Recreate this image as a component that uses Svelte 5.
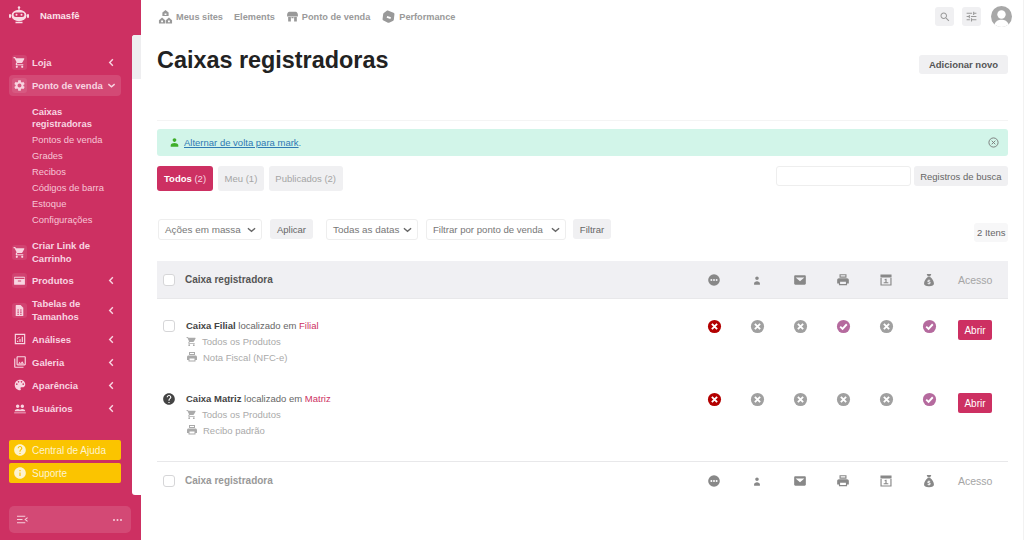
<script>
  const p = {
    cart: 'M7 18c-1.1 0-1.99.9-1.99 2S5.9 22 7 22s2-.9 2-2-.9-2-2-2zM1 2v2h2l3.6 7.59-1.35 2.45c-.16.28-.25.61-.25.96 0 1.1.9 2 2 2h12v-2H7.42c-.14 0-.25-.11-.25-.25l.03-.12.9-1.63h7.45c.75 0 1.41-.41 1.75-1.03l3.58-6.49c.08-.14.12-.31.12-.48 0-.55-.45-1-1-1H5.21l-.94-2H1zM17 18c-1.1 0-1.99.9-1.99 2s.89 2 1.99 2 2-.9 2-2-.9-2-2-2z',
    gear: 'M19.14 12.94c.04-.3.06-.61.06-.94 0-.32-.02-.64-.07-.94l2.03-1.58c.18-.14.23-.41.12-.61l-1.92-3.32c-.12-.22-.37-.29-.59-.22l-2.39.96c-.5-.38-1.03-.7-1.62-.94l-.36-2.54c-.04-.24-.24-.41-.48-.41h-3.84c-.24 0-.43.17-.47.41l-.36 2.54c-.59.24-1.13.57-1.62.94l-2.39-.96c-.22-.08-.47 0-.59.22L2.74 8.87c-.12.21-.08.47.12.61l2.03 1.58c-.05.3-.09.63-.09.94s.02.64.07.94l-2.03 1.58c-.18.14-.23.41-.12.61l1.92 3.32c.12.22.37.29.59.22l2.39-.96c.5.38 1.03.7 1.62.94l.36 2.54c.05.24.24.41.48.41h3.84c.24 0 .44-.17.47-.41l.36-2.54c.59-.24 1.13-.56 1.62-.94l2.39.96c.22.08.47 0 .59-.22l1.92-3.32c.12-.22.07-.47-.12-.61l-2.01-1.58zM12 15.6c-1.98 0-3.6-1.62-3.6-3.6s1.62-3.6 3.6-3.6 3.6 1.62 3.6 3.6-1.62 3.6-3.6 3.6z',
    print: 'M19 9H5c-1.66 0-3 1.34-3 3v6h3v3h14v-3h3v-6c0-1.66-1.34-3-3-3zM7 15h10v4H7v-4zM6 2h12v6H6V2zm2 2v2h8V4H8z',
    mail: 'M20 4H4c-1.1 0-1.99.9-1.99 2L2 18c0 1.1.9 2 2 2h16c1.1 0 2-.9 2-2V6c0-1.1-.9-2-2-2zm-8 10L4.500 7.500h15L12 14z',
    search: 'M15.5 14h-.79l-.28-.27C15.41 12.59 16 11.11 16 9.5 16 5.91 13.09 3 9.5 3S3 5.91 3 9.5 5.91 16 9.5 16c1.61 0 3.09-.59 4.23-1.57l.27.28v.79l5 4.99L20.49 19l-4.99-5zm-6 0C7.01 14 5 11.99 5 9.5S7.01 5 9.5 5 14 7.01 14 9.5 11.99 14 9.5 14z',
    tune: 'M3 17v2h6v-2H3zM3 5v2h10V5H3zm10 16v-2h8v-2h-8v-2h-2v6h2zM7 9v2H3v2h4v2h2V9H7zm14 4v-2H11v2h10zm-6-4h2V7h4V5h-4V3h-2v6z',
    help: 'M12 2C6.48 2 2 6.48 2 12s4.48 10 10 10 10-4.48 10-10S17.52 2 12 2zm1 17h-2v-2h2v2zm2.07-7.75l-.9.92C13.45 12.9 13 13.5 13 15h-2v-.5c0-1.1.45-2.1 1.17-2.83l1.24-1.26c.37-.36.59-.86.59-1.41 0-1.1-.9-2-2-2s-2 .9-2 2H8c0-2.21 1.79-4 4-4s4 1.79 4 4c0 .88-.36 1.68-.93 2.25z',
    info: 'M12 2C6.48 2 2 6.48 2 12s4.48 10 10 10 10-4.48 10-10S17.52 2 12 2zm1 15h-2v-6h2v6zm0-8h-2V7h2v2z',
    person: 'M12 11c1.9 0 3.4-1.5 3.4-3.4S13.9 4.2 12 4.2 8.6 5.7 8.6 7.6 10.1 11 12 11zm0 2c-3 0-7 1.3-7 3.8V20h14v-3.2c0-2.5-4-3.8-7-3.8z',
    bust: 'M12 12c1.700 0 3-1.300 3-3s-1.300-3-3-3-3 1.300-3 3 1.300 3 3 3zm-5 8v-2.500c0-1.800 2.500-3.500 5-3.500s5 1.700 5 3.500V20H7z',
    palette: 'M12 3c-4.97 0-9 4.03-9 9s4.03 9 9 9c.83 0 1.5-.67 1.5-1.5 0-.39-.15-.74-.39-1.01-.23-.26-.38-.61-.38-.99 0-.83.67-1.5 1.5-1.5H16c2.76 0 5-2.24 5-5 0-4.42-4.03-8-9-8zm-5.5 9c-.83 0-1.5-.67-1.5-1.5S5.67 9 6.5 9 8 9.67 8 10.5 7.33 12 6.5 12zm3-4C8.67 8 8 7.33 8 6.5S8.67 5 9.5 5s1.5.67 1.5 1.5S10.33 8 9.5 8zm5 0c-.83 0-1.5-.67-1.5-1.5S13.67 5 14.5 5s1.5.67 1.5 1.5S15.33 8 14.5 8zm3 4c-.83 0-1.5-.67-1.5-1.5S16.67 9 17.5 9s1.5.67 1.5 1.5-.67 1.5-1.5 1.5z',
    gallery: 'M20 4v12H8V4h12m0-2H8c-1.1 0-2 .9-2 2v12c0 1.1.9 2 2 2h12c1.1 0 2-.9 2-2V4c0-1.1-.9-2-2-2zm-8.5 9.67l1.69 2.26 2.48-3.1L19 15H9zM2 6v14c0 1.1.9 2 2 2h14v-2H4V6H2z',
    box: 'M3 5h18c.6 0 1 .4 1 1v13c0 .6-.4 1-1 1H3c-.6 0-1-.4-1-1V6c0-.6.4-1 1-1zm0 2v2h18V7H3zm6 5v2h6v-2H9z',
    doc: 'M6 2h8l5 5v15H5V3c0-.6.4-1 1-1zm2 8v2h3v-2H8zm5 0v2h3v-2h-3zm-5 4v2h3v-2H8zm5 0v2h3v-2h-3zm-5 4v2h3v-2H8zm5 0v2h3v-2h-3z',
    chart: 'M3 3h18v18H3V3zm2 2v14h14V5H5zm2 10h2v2H7v-2zm4-3h2v5h-2v-5zm4-4h2v9h-2V8zM7 11l4-3 1 1-4 3-1-1z',
    users: 'M8 12a3 3 0 100-6 3 3 0 000 6zm8 0a3 3 0 100-6 3 3 0 000 6zM3 17c0-2 3-3.500 5-3.500 1.500 0 3 .5 4 1.300 1-.8 2.500-1.300 4-1.300 2 0 5 1.500 5 3.500v.5H3V17zM2 19.500h20V21H2v-1.500z',
    sites: 'M12 1.500l5 4V11H7V5.500l5-4zM1.500 18l5-4.500 5 4.500v5h-10v-5zm11 0l5-4.500 5 4.500v5h-10v-5zM5 18.500v2.500h3v-2.500H5zm11 0v2.500h3v-2.500h-3zM10.500 7v2.500h3V7h-3z',
    store: 'M6 3h12c2 0 4 2.500 4 6v3H2V9c0-3.500 2-6 4-6zM4 13h5v8H4v-8zm11 0h5v8h-5v-8zM10 13h4v2h-4v-2z',
    cube: 'M11 2.500l9 3.500c1 .4 1.600 1.400 1.500 2.500l-1 8.500c-.1 1-.7 1.800-1.600 2.200l-6 2.600c-.6.2-1.200.2-1.800 0L4 18.500c-1-.4-1.600-1.400-1.500-2.400l1-8c.1-.9.700-1.700 1.500-2.100l4.200-3.300c.5-.3 1.200-.4 1.800-.2zm-1 8.500l-1 3 6 2 1-3-6-2z',
    bag: 'M8 1.500h8l-2 4.500h-4L8 1.500zM10 7h4c3.500 2.500 6.500 7.500 6.500 11 0 3-3 4.500-8.500 4.500S3.500 21 3.500 18c0-3.500 3-8.500 6.500-11zm1.200 4v1c-1.200.2-2 1-2 2 0 2.400 3.800 1.500 3.800 2.800 0 .9-2 .8-3.200.1l-.5 1.200c.6.400 1.200.5 1.900.6v1h1.500v-1c1.300-.2 2.100-1.100 2.100-2.100 0-2.500-3.800-1.600-3.800-2.700 0-.8 1.600-.7 2.800-.2l.4-1.200c-.5-.2-1-.4-1.500-.4v-1h-1.500z',
    cal: 'M2.500 2.500h19v5h-19v-5zM2.500 8.500h2v11h15v-11h2v13h-19v-13zM8 17.500h8V16h-3v-6h-1.500L9 11.500l1 1 1-.8V16H8v1.500z',
    dots: 'M12 2a10 10 0 100 20 10 10 0 000-20zM7.500 10.300a1.700 1.700 0 110 3.400 1.700 1.700 0 010-3.400zm4.500 0a1.700 1.700 0 110 3.400 1.700 1.700 0 010-3.400zm4.500 0a1.700 1.700 0 110 3.400 1.700 1.700 0 010-3.400z'
  };

  const before = [
    { icon: 'cart', label: 'Loja', chip: true, arrow: true }
  ];
  const subItems = ['Pontos de venda', 'Grades', 'Recibos', 'Códigos de barra', 'Estoque', 'Configurações'];
  const after = [
    { icon: 'cart', label: 'Criar Link de Carrinho', chip: true, two: true, cls: 'criar' },
    { icon: 'box', label: 'Produtos', chip: true, arrow: true, cls: 'produtos' },
    { icon: 'doc', label: 'Tabelas de Tamanhos', chip: true, arrow: true, two: true, cls: 'tabelas' },
    { icon: 'chart', label: 'Análises', arrow: true, cls: 'analises' },
    { icon: 'gallery', label: 'Galeria', arrow: true },
    { icon: 'palette', label: 'Aparência', arrow: true },
    { icon: 'users', label: 'Usuários', arrow: true }
  ];

  const cols = ['dots', 'bust', 'mail', 'print', 'cal', 'bag'];
  const rows = [
    { name: 'Caixa Filial', place: 'Filial', sub: 'Nota Fiscal (NFC-e)', status: ['no', 'off', 'off', 'ok', 'off', 'ok'], check: true },
    { name: 'Caixa Matriz', place: 'Matriz', sub: 'Recibo padrão', status: ['no', 'off', 'off', 'off', 'off', 'ok'], check: false }
  ];
</script>

{#snippet icon(name, size)}
  <svg width={size} height={size} viewBox="0 0 24 24" fill="currentColor"><path fill-rule="evenodd" d={p[name]} /></svg>
{/snippet}

{#snippet chevron(open)}
  <svg class="chev" width="9" height="9" viewBox="0 0 10 10" fill="none" stroke="currentColor" stroke-width="1.6">
    {#if open}<path d="M1.500 3.500L5 6.500l3.500-3" />{:else}<path d="M6.500 1.500L3 5l3.500 3.500" />{/if}
  </svg>
{/snippet}

{#snippet down()}
  <svg class="down" width="9" height="6" viewBox="0 0 10 6" fill="none" stroke="#666" stroke-width="1.500"><path d="M1 1l4 3.500L9 1" /></svg>
{/snippet}

{#snippet menuItem(item)}
  <div class="item {item.cls || ''}">
    <span class="mi" class:chip={item.chip}>{@render icon(item.icon, item.chip ? 13 : 14)}</span>
    <span class="label" class:two={item.two}>{item.label}</span>
    {#if item.arrow}{@render chevron(false)}{/if}
  </div>
{/snippet}

{#snippet status(kind)}
  <svg class="st" width="15" height="15" viewBox="0 0 16 16">
    <circle cx="8" cy="8" r="7" fill={kind === 'no' ? '#b30000' : kind === 'ok' ? '#b56a9e' : '#a0a0a0'} />
    {#if kind === 'ok'}
      <path d="M4.500 8.200l2.500 2.400 4.500-5" fill="none" stroke="#fff" stroke-width="2" />
    {:else}
      <path d="M5.200 5.200l5.600 5.600M10.800 5.200l-5.600 5.600" fill="none" stroke="#fff" stroke-width="2" />
    {/if}
  </svg>
{/snippet}

{#snippet headRow()}
  <span class="cb head-cb"></span>
  <span class="head-title">Caixa registradora</span>
  {#each cols as c}
    <span class="col head-icon">{@render icon(c, 14)}</span>
  {/each}
  <span class="access">Acesso</span>
{/snippet}

<div class="page">
  <aside class="sidebar">
    <div class="brand">
      <svg width="20" height="18" viewBox="0 0 20 18">
        <circle cx="10" cy="1.500" r="1.200" fill="#f9dbe5" />
        <path d="M10 2v2" stroke="#f9dbe5" />
        <ellipse cx="10" cy="9.500" rx="7.500" ry="5.800" fill="#f9dbe5" />
        <rect x="0" y="8" width="2" height="4" rx="1" fill="#f9dbe5" />
        <rect x="18" y="8" width="2" height="4" rx="1" fill="#f9dbe5" />
        <rect x="4.500" y="6.500" width="11" height="4.500" rx="2.200" fill="#cd3062" />
        <circle cx="7.500" cy="8.700" r="1" fill="#f9dbe5" />
        <circle cx="12.500" cy="8.700" r="1" fill="#f9dbe5" />
        <path d="M6.500 16.500h7" stroke="#f9dbe5" stroke-width="1.500" />
      </svg>
      <span>Namasfê</span>
    </div>

    <nav class="menu">
      {#each before as item}
        {@render menuItem(item)}
      {/each}
      <div class="item active">
        <span class="mi chip">{@render icon('gear', 13)}</span>
        <span class="label">Ponto de venda</span>
        {@render chevron(true)}
      </div>
      <div class="submenu">
        <div class="sub current">Caixas registradoras</div>
        {#each subItems as s}
          <div class="sub">{s}</div>
        {/each}
      </div>
      {#each after as item}
        {@render menuItem(item)}
      {/each}
    </nav>

    <div class="helpers">
      <div class="yellow"><span class="yi">{@render icon('help', 14)}</span>Central de Ajuda</div>
      <div class="yellow"><span class="yi">{@render icon('info', 14)}</span>Suporte</div>
    </div>

    <div class="side-foot">
      <svg width="11" height="9" viewBox="0 0 12 9" fill="none" stroke="#f6cfdc" stroke-width="1.200"><path d="M0 1h9M0 4.500h6M0 8h9M11.500 2.500L9 4.500l2.500 2" /></svg>
      <svg width="9" height="2" viewBox="0 0 9 2" fill="#f6cfdc"><circle cx="1" cy="1" r="1" /><circle cx="4.500" cy="1" r="1" /><circle cx="8" cy="1" r="1" /></svg>
    </div>

    <div class="side-scroll"><div class="thumb"></div></div>
  </aside>

  <main class="main">
    <div class="topbar">
      <span class="tl">{@render icon('sites', 15)}<b>Meus sites</b></span>
      <span class="tl"><b>Elements</b></span>
      <span class="tl">{@render icon('store', 13)}<b>Ponto de venda</b></span>
      <span class="tl">{@render icon('cube', 15)}<b>Performance</b></span>
      <span class="top-right">
        <span class="square">{@render icon('search', 12)}</span>
        <span class="square">{@render icon('tune', 13)}</span>
        <svg class="avatar" width="21" height="21" viewBox="0 0 21 21">
          <circle cx="10.500" cy="10.500" r="10.500" fill="#a8a8a8" />
          <circle cx="10.500" cy="8.500" r="4.200" fill="#fff" />
          <path d="M3.500 18.500c1-3.500 4-4.800 7-4.800s6 1.300 7 4.800c-2 1.600-4.300 2.500-7 2.500s-5-.9-7-2.500z" fill="#fff" />
        </svg>
      </span>
    </div>

    <header class="title-row">
      <h1>Caixas registradoras</h1>
      <button class="btn add">Adicionar novo</button>
    </header>

    <div class="notice">
      <span class="green">{@render icon('person', 13)}</span>
      <span><a href="#top">Alternar de volta para mark</a>.</span>
      <svg class="close" width="11" height="11" viewBox="0 0 12 12" fill="none" stroke="#777" stroke-width="1"><circle cx="6" cy="6" r="5" /><path d="M4 4l4 4M8 4l-4 4" /></svg>
    </div>

    <div class="tabs-row">
      <span class="tab on">Todos <i>(2)</i></span>
      <span class="tab">Meu (1)</span>
      <span class="tab">Publicados (2)</span>
      <span class="search-box">
        <input type="text" aria-label="Registros de busca" />
        <button class="btn plain">Registros de busca</button>
      </span>
    </div>

    <div class="filters">
      <span class="sel w1">Ações em massa{@render down()}</span>
      <button class="btn plain apply">Aplicar</button>
      <span class="sel w2">Todas as datas{@render down()}</span>
      <span class="sel w3">Filtrar por ponto de venda{@render down()}</span>
      <button class="btn plain apply f2">Filtrar</button>
      <span class="count">2 Itens</span>
    </div>

    <div class="table">
      <div class="line head">{@render headRow()}</div>
      <div class="body">
        {#each rows as r}
          <div class="line row">
            {#if r.check}
              <span class="cb"></span>
            {:else}
              <span class="q">{@render icon('help', 14)}</span>
            {/if}
            <div class="info">
              <div class="name"><b>{r.name}</b> localizado em <em>{r.place}</em></div>
              <div class="meta">{@render icon('cart', 11)}<span>Todos os Produtos</span></div>
              <div class="meta">{@render icon('print', 12)}<span>{r.sub}</span></div>
            </div>
            {#each r.status as s}
              <span class="col">{@render status(s)}</span>
            {/each}
            <span class="access"><button class="open">Abrir</button></span>
          </div>
        {/each}
      </div>
      <div class="line foot">{@render headRow()}</div>
    </div>
  </main>
</div>

<style>
  :global(body) {
    margin: 0;
    overflow: hidden;
    background: #fff;
  }

  .page {
    display: flex;
    height: 540px;
    font-family: "Liberation Sans", Arial, sans-serif;
    font-size: 9.5px;
    color: #555;
  }

  /* sidebar */
  .sidebar {
    position: relative;
    flex: 0 0 141px;
    display: flex;
    flex-direction: column;
    background: #cd3062;
    color: #f8d5e1;
    font-weight: 700;
  }

  .brand {
    display: flex;
    align-items: center;
    gap: 11px;
    height: 30px;
    padding-left: 9px;
    font-size: 9.5px;
    color: #fbe3ea;
  }

  .menu {
    margin: 22px 0 0 9px;
    width: 112px;
  }

  .item {
    display: flex;
    align-items: center;
    min-height: 20px;
    margin-bottom: 3px;
    padding: 0 5px 0 3px;
    box-sizing: border-box;
    border-radius: 4px;
  }

  .item.active {
    min-height: 21px;
    background: rgba(255, 255, 255, 0.12);
    margin-bottom: 10px;
  }

  .mi {
    flex: 0 0 15px;
    height: 15px;
    display: flex;
    align-items: center;
    justify-content: center;
    margin-right: 5px;
  }

  .mi.chip {
    background: rgba(255, 255, 255, 0.09);
    border-radius: 3px;
  }

  .label {
    flex: 1;
    line-height: 13px;
  }

  .chev {
    flex: none;
    margin-left: 2px;
  }

  .submenu {
    padding-left: 23px;
    margin-bottom: 11px;
    font-weight: 400;
    color: #f7c6d6;
    font-size: 9.4px;
  }

  .sub {
    line-height: 16px;
  }

  .sub.current {
    line-height: 12px;
    font-weight: 700;
    color: #f8d5e1;
    width: 70px;
    margin-bottom: 2px;
  }

  .criar {
    margin-bottom: 5px;
  }

  .produtos {
    margin-bottom: 7px;
  }

  .tabelas {
    margin-bottom: 6px;
  }

  .helpers {
    margin: 19px 0 0 9px;
    width: 112px;
    display: flex;
    flex-direction: column;
    gap: 3px;
  }

  .yellow {
    display: flex;
    align-items: center;
    height: 20px;
    border-radius: 2px;
    background: #fbc400;
    color: #fdf3cf;
    font-weight: 400;
    padding-left: 4px;
    font-size: 10px;
  }

  .yi {
    display: flex;
    margin-right: 5px;
  }

  .side-foot {
    display: flex;
    align-items: center;
    justify-content: space-between;
    margin: 23px 10px 0 9px;
    height: 27px;
    padding: 0 9px 0 8px;
    border-radius: 5px;
    background: rgba(255, 255, 255, 0.12);
  }

  .side-scroll {
    position: absolute;
    left: 132px;
    top: 35px;
    width: 9px;
    height: 460px;
    background: #fff;
    border-radius: 3px 0 0 3px;
  }

  .thumb {
    height: 44px;
    background: #eeeef0;
    border-radius: 3px 0 0 0;
  }

  /* main column */
  .main {
    flex: 1;
    min-width: 0;
    padding: 0 15px 0 16px;
    border-right: 1px solid #f2f2f2;
    overflow: hidden;
  }

  .topbar {
    display: flex;
    align-items: center;
    height: 33px;
    color: #999;
  }

  .tl {
    display: flex;
    align-items: center;
    gap: 3px;
    margin: 0 10px 0 1px;
  }

  .tl b {
    font-size: 9.200px;
    color: #9a9a9a;
  }

  .top-right {
    margin-left: auto;
    margin-right: -4px;
    display: flex;
    align-items: center;
    gap: 8px;
  }

  .square {
    width: 19px;
    height: 19px;
    display: flex;
    align-items: center;
    justify-content: center;
    background: #f0f0f2;
    border-radius: 3px;
    color: #999;
  }

  .avatar {
    margin-left: 2px;
  }

  .title-row {
    display: flex;
    justify-content: space-between;
    align-items: flex-start;
    height: 75px;
    padding-top: 12px;
    border-bottom: 1px solid #f4f4f4;
  }

  h1 {
    margin: 0;
    font-size: 23.400px;
    line-height: 30px;
    font-weight: 700;
    color: #222;
  }

  .btn {
    border: 0;
    border-radius: 3px;
    background: #f0f0f2;
    font: inherit;
    color: #555;
    padding: 0;
  }

  .add {
    width: 89px;
    height: 19px;
    margin-top: 10px;
    font-weight: 700;
  }

  .notice {
    display: flex;
    align-items: center;
    gap: 3px;
    height: 27px;
    margin-top: 8px;
    padding: 0 9px 0 11px;
    background: #d2f5e9;
    border-radius: 3px;
    color: #3b7fb5;
  }

  .notice a {
    color: #2f79b4;
  }

  .green {
    display: flex;
    color: #3fae2a;
  }

  .close {
    margin-left: auto;
  }

  .tabs-row {
    display: flex;
    align-items: flex-start;
    gap: 5px;
    margin-top: 10px;
    height: 25px;
  }

  .tab {
    height: 25px;
    line-height: 25px;
    padding: 0 6.500px;
    border-radius: 3px;
    background: #f0f0f2;
    color: #a5a5a5;
    white-space: nowrap;
  }

  .tab.on {
    background: #cd3062;
    color: #fff;
    font-weight: 700;
    padding: 0 7px;
  }

  .tab i {
    font-style: normal;
    font-weight: 400;
    color: #f8d5e1;
  }

  .search-box {
    margin-left: auto;
    display: flex;
    gap: 3px;
  }

  input {
    width: 135px;
    height: 20px;
    box-sizing: border-box;
    border: 1px solid #eee;
    border-radius: 3px;
    padding: 0;
    outline: 0;
  }

  .plain {
    height: 20px;
    padding: 0 6.500px;
    color: #666;
    white-space: nowrap;
  }

  .filters {
    display: flex;
    align-items: flex-start;
    margin-top: 28px;
    height: 42px;
  }

  .sel {
    display: flex;
    align-items: center;
    justify-content: space-between;
    height: 21px;
    box-sizing: border-box;
    padding: 0 5px 0 6px;
    border: 1px solid #eee;
    border-radius: 3px;
    color: #777;
    font-size: 9.900px;
    white-space: nowrap;
  }

  .down {
    flex: none;
  }

  .w1 {
    width: 104px;
    margin-left: 1px;
  }

  .w2 {
    width: 92px;
    margin-left: 13px;
  }

  .w3 {
    width: 140px;
    margin-left: 8px;
    font-size: 9.600px;
  }

  .apply {
    width: 43px;
    height: 20px;
    padding: 0;
    margin-left: 8px;
  }

  .f2 {
    width: 38px;
    margin-left: 7px;
  }

  .count {
    margin: 4px 0 0 auto;
    height: 19px;
    line-height: 19px;
    padding: 0 2.500px;
    border-radius: 3px;
    background: #f7f7f8;
    color: #666;
  }

  /* table */
  .line {
    display: grid;
    grid-template-columns: 28px minmax(0, 507.500px) repeat(6, 43px) 1fr;
    align-items: center;
  }

  .head {
    height: 38px;
    background: #f0f0f3;
    border-bottom: 1px solid #e8e8ea;
    box-sizing: border-box;
  }

  .foot {
    height: 38px;
    border-top: 1px solid #e8e8ea;
    box-sizing: border-box;
  }

  .cb {
    display: block;
    width: 10px;
    height: 10px;
    margin-left: 6px;
    border: 1px solid #d6d6d8;
    border-radius: 3px;
    background: #fff;
  }

  .head-title {
    font-weight: 700;
    color: #555;
    font-size: 10px;
  }

  .foot .head-title {
    color: #999;
  }

  .col {
    display: flex;
    justify-content: center;
  }

  .head-icon {
    color: #888;
  }

  .access {
    padding-left: 7.500px;
    color: #a5a5a5;
    font-size: 10.500px;
  }

  .body {
    padding: 8px 0;
  }

  .row {
    height: 73px;
    align-items: start;
    padding-top: 12px;
    box-sizing: border-box;
  }

  .row .cb {
    margin-top: 1px;
  }

  .q {
    display: flex;
    margin-left: 5px;
    color: #444;
  }

  .info {
    line-height: 15.500px;
    color: #666;
    margin-left: 1px;
  }

  .name {
    height: 15px;
    line-height: 14px;
  }

  .name b {
    color: #444;
  }

  .name em {
    font-style: normal;
    color: #cd3062;
  }

  .meta {
    display: flex;
    align-items: center;
    gap: 5px;
    color: #aaa;
  }

  .st {
    display: block;
  }

  .open {
    width: 34px;
    height: 20px;
    margin-top: 1px;
    border: 0;
    border-radius: 2px;
    background: #cd3062;
    color: #fff;
    font: inherit;
    font-size: 10px;
    padding: 0;
  }
</style>
